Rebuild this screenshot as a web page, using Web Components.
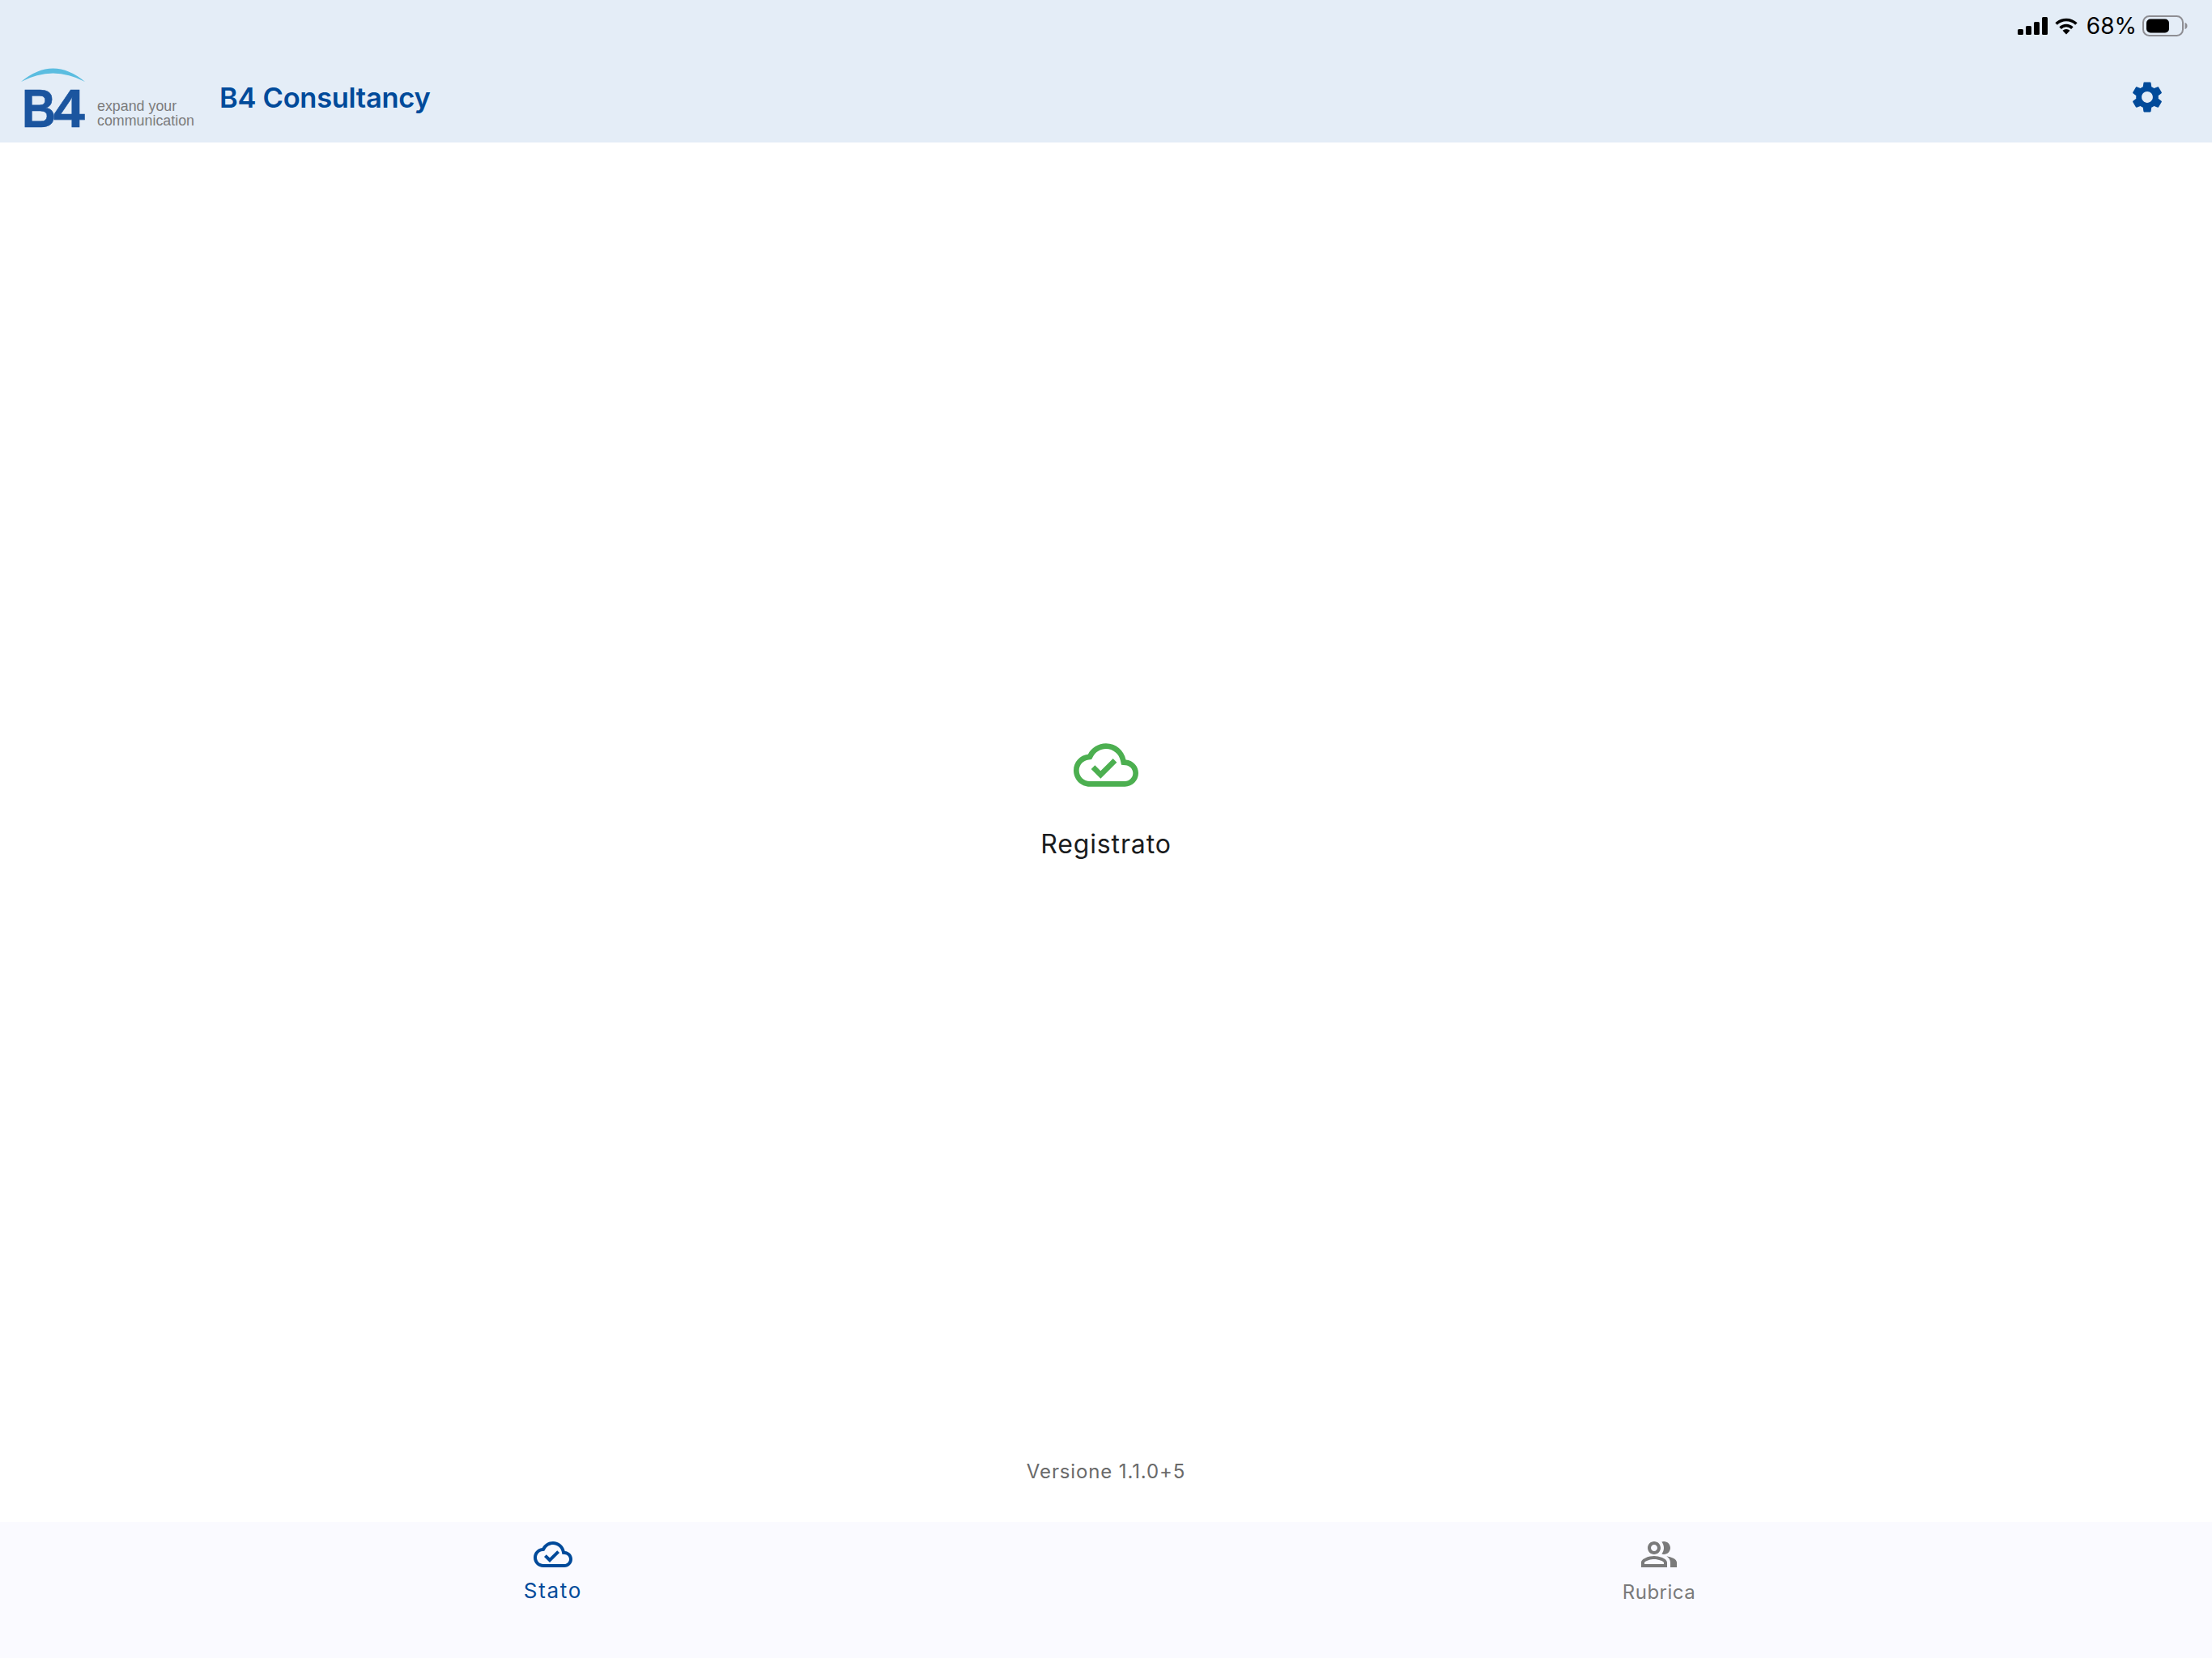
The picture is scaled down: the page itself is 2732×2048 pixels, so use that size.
<!DOCTYPE html>
<html lang="it">
<head>
<meta charset="utf-8">
<title>B4 Consultancy</title>
<style>
  html, body { margin: 0; padding: 0; background: #fff; }
  body { font-family: Inter, "Liberation Sans", sans-serif; }
</style>
</head>
<body>
<app-shell>
  <status-bar slot="status" percent="68%"></status-bar>
  <app-header slot="header" title="B4 Consultancy"></app-header>
  <status-panel slot="main" label="Registrato"></status-panel>
  <version-note slot="version">Versione 1.1.0+5</version-note>
  <tab-bar slot="tabs">
    <tab-item icon="cloud" label="Stato" active></tab-item>
    <tab-item icon="people" label="Rubrica"></tab-item>
  </tab-bar>
</app-shell>
<script>
const ICONS = {
  cloud: '<path d="M19.35 10.04C18.67 6.59 15.64 4 12 4 9.11 4 6.6 5.64 5.35 8.04 2.34 8.36 0 10.91 0 14c0 3.31 2.69 6 6 6h13c2.76 0 5-2.24 5-5 0-2.64-2.05-4.78-4.65-4.96zM19 18H6c-2.21 0-4-1.79-4-4 0-2.05 1.53-3.76 3.56-3.97l1.07-.11.5-.95C8.08 7.14 9.94 6 12 6c2.62 0 4.88 1.86 5.39 4.43l.3 1.5 1.53.11c1.56.1 2.78 1.41 2.78 2.96 0 1.65-1.35 3-3 3zm-9-3.82l-2.09-2.09L6.5 13.5 10 17l6.01-6.01-1.41-1.41z"/>',
  people: '<path d="M16.67 13.13C18.04 14.06 19 15.32 19 17v3h4v-3c0-2.18-3.57-3.47-6.33-3.87z"/><path d="M15 12c2.21 0 4-1.79 4-4s-1.79-4-4-4c-.47 0-.91.1-1.33.24C14.5 5.27 15 6.58 15 8s-.5 2.73-1.33 3.76c.42.14.86.24 1.33.24z"/><path fill-rule="evenodd" d="M9 12c2.21 0 4-1.79 4-4s-1.79-4-4-4-4 1.79-4 4 1.79 4 4 4zm0-6c1.1 0 2 .9 2 2s-.9 2-2 2-2-.9-2-2 .9-2 2-2z"/><path fill-rule="evenodd" d="M9 13c-2.67 0-8 1.34-8 4v3h16v-3c0-2.66-5.33-4-8-4zm6 5H3v-.99C3.2 16.29 6.3 15 9 15s5.8 1.29 6 2v1z"/>',
  gear: '<path fill-rule="evenodd" d="M19.14 12.94c.04-.3.06-.61.06-.94 0-.32-.02-.64-.07-.94l2.03-1.58c.18-.14.23-.41.12-.61l-1.92-3.32c-.12-.22-.37-.29-.59-.22l-2.39.96c-.5-.38-1.03-.7-1.62-.94l-.36-2.54c-.04-.24-.24-.41-.48-.41h-3.84c-.24 0-.43.17-.47.41l-.36 2.54c-.59.24-1.13.57-1.62.94l-2.39-.96c-.22-.08-.47 0-.59.22L2.74 8.87c-.12.21-.08.47.12.61l2.03 1.58c-.05.3-.09.63-.09.94s.02.64.07.94l-2.03 1.58c-.18.14-.23.41-.12.61l1.92 3.32c.12.22.37.29.59.22l2.39-.96c.5.38 1.03.7 1.62.94l.36 2.54c.05.24.24.41.48.41h3.84c.24 0 .44-.17.47-.41l.36-2.54c.59-.24 1.13-.56 1.62-.94l2.39.96c.22.08.47 0 .59-.22l1.92-3.32c.12-.22.07-.47-.12-.61l-2.01-1.58zM12 15.6c-1.98 0-3.6-1.62-3.6-3.6s1.62-3.6 3.6-3.6 3.6 1.62 3.6 3.6-1.62 3.6-3.6 3.6z"/>'
};
function define(name, html, extra) {
  const tpl = document.createElement('template');
  tpl.innerHTML = html;
  customElements.define(name, class extends HTMLElement {
    constructor() {
      super();
      this.attachShadow({ mode: 'open' }).appendChild(tpl.content.cloneNode(true));
      if (extra) extra(this);
    }
  });
}
define('app-shell', `
<style>
  :host { display: flex; flex-direction: column; width: 2732px; height: 2048px; background: #fff; overflow: hidden; }
  .top { display: flex; flex-direction: column; background: #e4edf7; }
  .main { flex: 1; display: flex; flex-direction: column; min-height: 0; }
</style>
<div class="top"><slot name="status"></slot><slot name="header"></slot></div>
<div class="main"><slot name="main"></slot><slot name="version"></slot></div>
<slot name="tabs"></slot>`);

define('status-bar', `
<style>
  :host { display: flex; justify-content: flex-end; align-items: center; height: 64px; padding-right: 30px; color: #000; font: 400 28px/32px Inter, "Liberation Sans", sans-serif; }
  .row { display: flex; align-items: center; }
  svg { display: block; }
  .pct { margin: 0 7px 0 10px; }
</style>
<div class="row">
  <svg width="37" height="22" viewBox="0 0 37 22" style="margin-right:8px"><rect x="0" y="15" width="7" height="7" rx="1.500"/><rect x="10" y="11" width="7" height="11" rx="1.500"/><rect x="20" y="6" width="7" height="16" rx="1.500"/><rect x="30" y="0" width="7" height="22" rx="1.500"/></svg>
  <svg width="30" height="21" viewBox="0 0 30 21"><g fill="none" stroke="#000" stroke-width="3.600"><path d="M2.600 7.600A17.500 17.500 0 0 1 27.400 7.600"/><path d="M7.600 12.600A10.500 10.500 0 0 1 22.400 12.600"/></g><path d="M15 20.500 10.500 15.800A6.300 6.300 0 0 1 19.500 15.800z"/></svg>
  <span class="pct"></span>
  <svg width="56" height="26" viewBox="0 0 56 26"><rect x="1" y="1" width="49" height="24" rx="7.500" fill="none" stroke="#8e8e93" stroke-width="2"/><rect x="5" y="4.500" width="28" height="17" rx="5"/><path d="M52.500 9c2 .5 3 2 3 4s-1 3.500-3 4z" fill="#8e8e93"/></svg>
</div>`, el => { el.shadowRoot.querySelector('.pct').textContent = el.getAttribute('percent'); });

define('brand-logo', `
<style>
  :host { display: flex; flex-direction: column; width: 240px; flex: none; }
  svg { display: block; }
  .row { display: flex; align-items: flex-end; margin-top: 9px; }
  .b4 { flex: none; display: flex; font: 700 67px/46px "Liberation Sans", Arial, sans-serif; color: #1b559f; margin-left: 27px; width: 93px; height: 46px; -webkit-text-stroke: .6px #1b559f; }
  .b { display: block; width: 39px; transform: scaleX(.87); transform-origin: 0 50%; }
  .four { display: block; width: 54px; transform: scaleX(1.04); transform-origin: 0 50%; }
  .tag { flex: none; font: 400 17.850px/18px "Liberation Sans", Arial, sans-serif; color: #7c7c7c; white-space: nowrap; margin-bottom: -1.500px; }
</style>
<svg width="120" height="18" viewBox="0 0 120 18"><path d="M26 17 Q65.500 -16 105 17 Q65.500 -4 26 17z" fill="#5bbde0"/></svg>
<div class="row"><div class="b4"><span class="b">B</span><span class="four">4</span></div><span class="tag">expand your<br>communication</span></div>`);

define('app-header', `
<style>
  :host { display: flex; align-items: center; height: 112px; position: relative; }
  .left { display: flex; align-items: flex-start; flex: 1; }
  h1 { margin: 15px 0 0 31px; font: 600 34.500px/44px Inter, "Liberation Sans", sans-serif; color: #004a9a; letter-spacing: -.3px; white-space: nowrap; }
  svg { display: block; fill: #004a9a; margin-right: 57px; }
</style>
<div class="left"><brand-logo></brand-logo><h1></h1></div>
<svg width="46" height="46" viewBox="0 0 24 24">${ICONS.gear}</svg>`, el => { el.shadowRoot.querySelector('h1').textContent = el.getAttribute('title'); });

define('status-panel', `
<style>
  :host { display: flex; flex: 1; flex-direction: column; align-items: center; justify-content: center; padding-bottom: 10px; color: #1a1c1e; }
  svg { display: block; fill: #4caf50; }
  .l { font: 400 32px/40px Inter, "Liberation Sans", sans-serif; letter-spacing: .85px; margin-top: 38px; white-space: nowrap; }
</style>
<svg width="80" height="80" viewBox="0 0 24 24">${ICONS.cloud}</svg>
<div class="l"></div>`, el => { el.shadowRoot.querySelector('.l').textContent = el.getAttribute('label'); });

define('version-note', `
<style>
  :host { display: block; text-align: center; font: 400 24px/32px Inter, "Liberation Sans", sans-serif; color: #6a6a6a; letter-spacing: .87px; padding-bottom: 46px; }
</style><slot></slot>`);

define('tab-bar', `
<style>
  :host { display: grid; grid-template-columns: 1fr 1fr; height: 168px; background: #fafaff; }
</style><slot></slot>`);

define('tab-item', `
<style>
  :host { display: flex; flex-direction: column; align-items: center; padding-top: 16px; color: #7a7a7a; font: 400 24px/30px Inter, "Liberation Sans", sans-serif; letter-spacing: .5px; }
  :host([active]) { color: #004a9a; font-size: 26px; letter-spacing: 1.700px; }
  svg { display: block; fill: currentColor; }
  .l { margin-top: 8px; }
  :host([active]) .l { margin-top: 6px; }
</style>
<svg width="48" height="48" viewBox="0 0 24 24"></svg>
<div class="l"></div>`, el => {
  el.shadowRoot.querySelector('svg').innerHTML = ICONS[el.getAttribute('icon')];
  el.shadowRoot.querySelector('.l').textContent = el.getAttribute('label');
});
</script>
</body>
</html>
